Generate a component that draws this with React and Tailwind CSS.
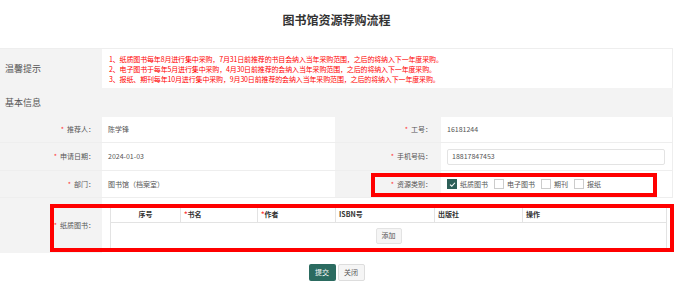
import React from "react";

const font = { fontFamily: '"Noto Sans CJK SC", "Noto Sans", sans-serif' };

const tips = [
  "1、纸质图书每年8月进行集中采购，7月31日前推荐的书目会纳入当年采购范围，之后的将纳入下一年度采购。",
  "2、电子图书于每年5月进行集中采购，4月30日前推荐的会纳入当年采购范围，之后的将纳入下一年度采购。",
  "3、报纸、期刊每年10月进行集中采购，9月30日前推荐的会纳入当年采购范围，之后的将纳入下一年度采购。",
];

function Label({ text, w = "w-[102px]", pr = "pr-[7px]" }) {
  return (
    <div className={`${w} shrink-0 bg-[#f3f3f3] flex items-center justify-end ${pr} text-[7px] text-[#555]`}>
      <span className="text-[#f33] mr-[3px]">*</span>
      {text}：
    </div>
  );
}

function Check({ checked, label }) {
  return (
    <div className="flex items-center">
      {checked ? (
        <span className="w-[10px] h-[10px] bg-[#2d5f58] flex items-center justify-center">
          <svg width="7" height="7" viewBox="0 0 10 10">
            <path d="M1.5 5.2 L4 7.5 L8.5 2.5" stroke="#fff" strokeWidth="1.6" fill="none" />
          </svg>
        </span>
      ) : (
        <span className="w-[10px] h-[10px] border border-[#ccc] bg-white" />
      )}
      <span className="ml-[3px] text-[7px] text-[#555]">{label}</span>
    </div>
  );
}

const cols = [
  { w: "w-[70px]", t: "序号", center: true },
  { w: "w-[77px]", t: "书名", req: true },
  { w: "w-[78px]", t: "作者", req: true },
  { w: "w-[99px]", t: "ISBN号" },
  { w: "w-[88px]", t: "出版社" },
  { w: "flex-1", t: "操作" },
];

export default function App() {
  return (
    <div className="w-[688px] h-[296px] bg-white relative overflow-hidden" style={font}>
      <div className="w-[673px]">
        {/* Title */}
        <div className="h-[48px] pt-[12px] text-center text-[12px] leading-[15px] font-bold text-[#333]">
          图书馆资源荐购流程
        </div>

        {/* Tips */}
        <div className="flex h-[40px] border-t border-[#eee]">
          <div className="w-[102px] shrink-0 bg-[#f3f3f3] flex items-center pl-[5px] text-[9px] text-[#555]">
            温馨提示
          </div>
          <div className="flex-1 bg-white border-r border-[#eee] pl-[7px] flex flex-col justify-center">
            {tips.map((t) => (
              <p key={t} className="text-[7px] leading-[10px] tracking-[-0.15px] text-[#f00] whitespace-nowrap">
                {t}
              </p>
            ))}
          </div>
        </div>

        {/* Section */}
        <div className="h-[29px] bg-[#f3f3f3] flex items-center pl-[5px] text-[9px] text-[#555]">
          基本信息
        </div>

        {/* Row 1 */}
        <div className="flex h-[26px] border-b border-[#eee]">
          <Label text="推荐人" />
          <div className="w-[233px] flex items-center pl-[6px] text-[7px] text-[#555]">陈学锋</div>
          <Label text="工号" w="w-[106px]" pr="pr-[9px]" />
          <div className="flex-1 flex items-center pl-[6px] text-[7px] text-[#555] border-r border-[#eee]">
            16181244
          </div>
        </div>

        {/* Row 2 */}
        <div className="flex h-[28px] border-b border-[#eee]">
          <Label text="申请日期" />
          <div className="w-[233px] flex items-center pl-[6px] text-[7px] text-[#555]">2024-01-03</div>
          <Label text="手机号码" w="w-[106px]" pr="pr-[9px]" />
          <div className="flex-1 flex items-center pl-[6px] pr-[7px] border-r border-[#eee]">
            <div className="w-full h-[16px] border border-[#e3e3e3] rounded-[2px] flex items-center pl-[4px] text-[7px] text-[#555]">
              18817847453
            </div>
          </div>
        </div>

        {/* Row 3 */}
        <div className="flex h-[27px] border-b border-[#eee]">
          <Label text="部门" />
          <div className="w-[233px] flex items-center pl-[6px] text-[7px] text-[#555]">图书馆（档案室）</div>
          <Label text="资源类别" w="w-[106px]" pr="pr-[9px]" />
          <div className="flex-1 flex items-center pl-[6px] gap-[6px] border-r border-[#eee]">
            <Check checked label="纸质图书" />
            <Check label="电子图书" />
            <Check label="期刊" />
            <Check label="报纸" />
          </div>
        </div>

        {/* Row 4 */}
        <div className="flex h-[55px]">
          <Label text="纸质图书" />
          <div className="flex-1 pl-[8px] pr-[6px] pt-[7px]">
            <div className="border border-[#e3e3e3]">
              <div className="flex h-[17px] border-b border-[#e3e3e3] text-[7px] font-bold text-[#333]">
                {cols.map((c, i) => (
                  <div
                    key={c.t}
                    className={`${c.w} flex items-center ${c.center ? "justify-center" : "pl-[3px]"} ${
                      i < cols.length - 1 ? "border-r border-[#e3e3e3]" : ""
                    }`}
                  >
                    {c.req && <span className="text-[#f33]">*</span>}
                    {c.t}
                  </div>
                ))}
              </div>
              <div className="h-[25px] flex items-center justify-center">
                <button className="w-[26px] h-[16px] bg-[#f5f5f5] border border-[#e3e3e3] rounded-[2px] text-[7px] text-[#555]">
                  添加
                </button>
              </div>
            </div>
          </div>
        </div>

        {/* Buttons */}
        <div className="flex justify-center gap-[2px] mt-[11px]">
          <button className="w-[27px] h-[17px] bg-[#2b6b60] rounded-[2px] text-[7px] text-white">提交</button>
          <button className="w-[27px] h-[17px] bg-[#f5f5f5] border border-[#ddd] rounded-[2px] text-[7px] text-[#555]">
            关闭
          </button>
        </div>
      </div>

      {/* Annotation boxes */}
      <div className="absolute left-[371px] top-[173px] w-[286px] h-[24px] border-[4px] border-[#f00]" />
      <div className="absolute left-[50px] top-[204px] w-[624px] h-[48px] border-[4px] border-[#f00]" />
    </div>
  );
}
